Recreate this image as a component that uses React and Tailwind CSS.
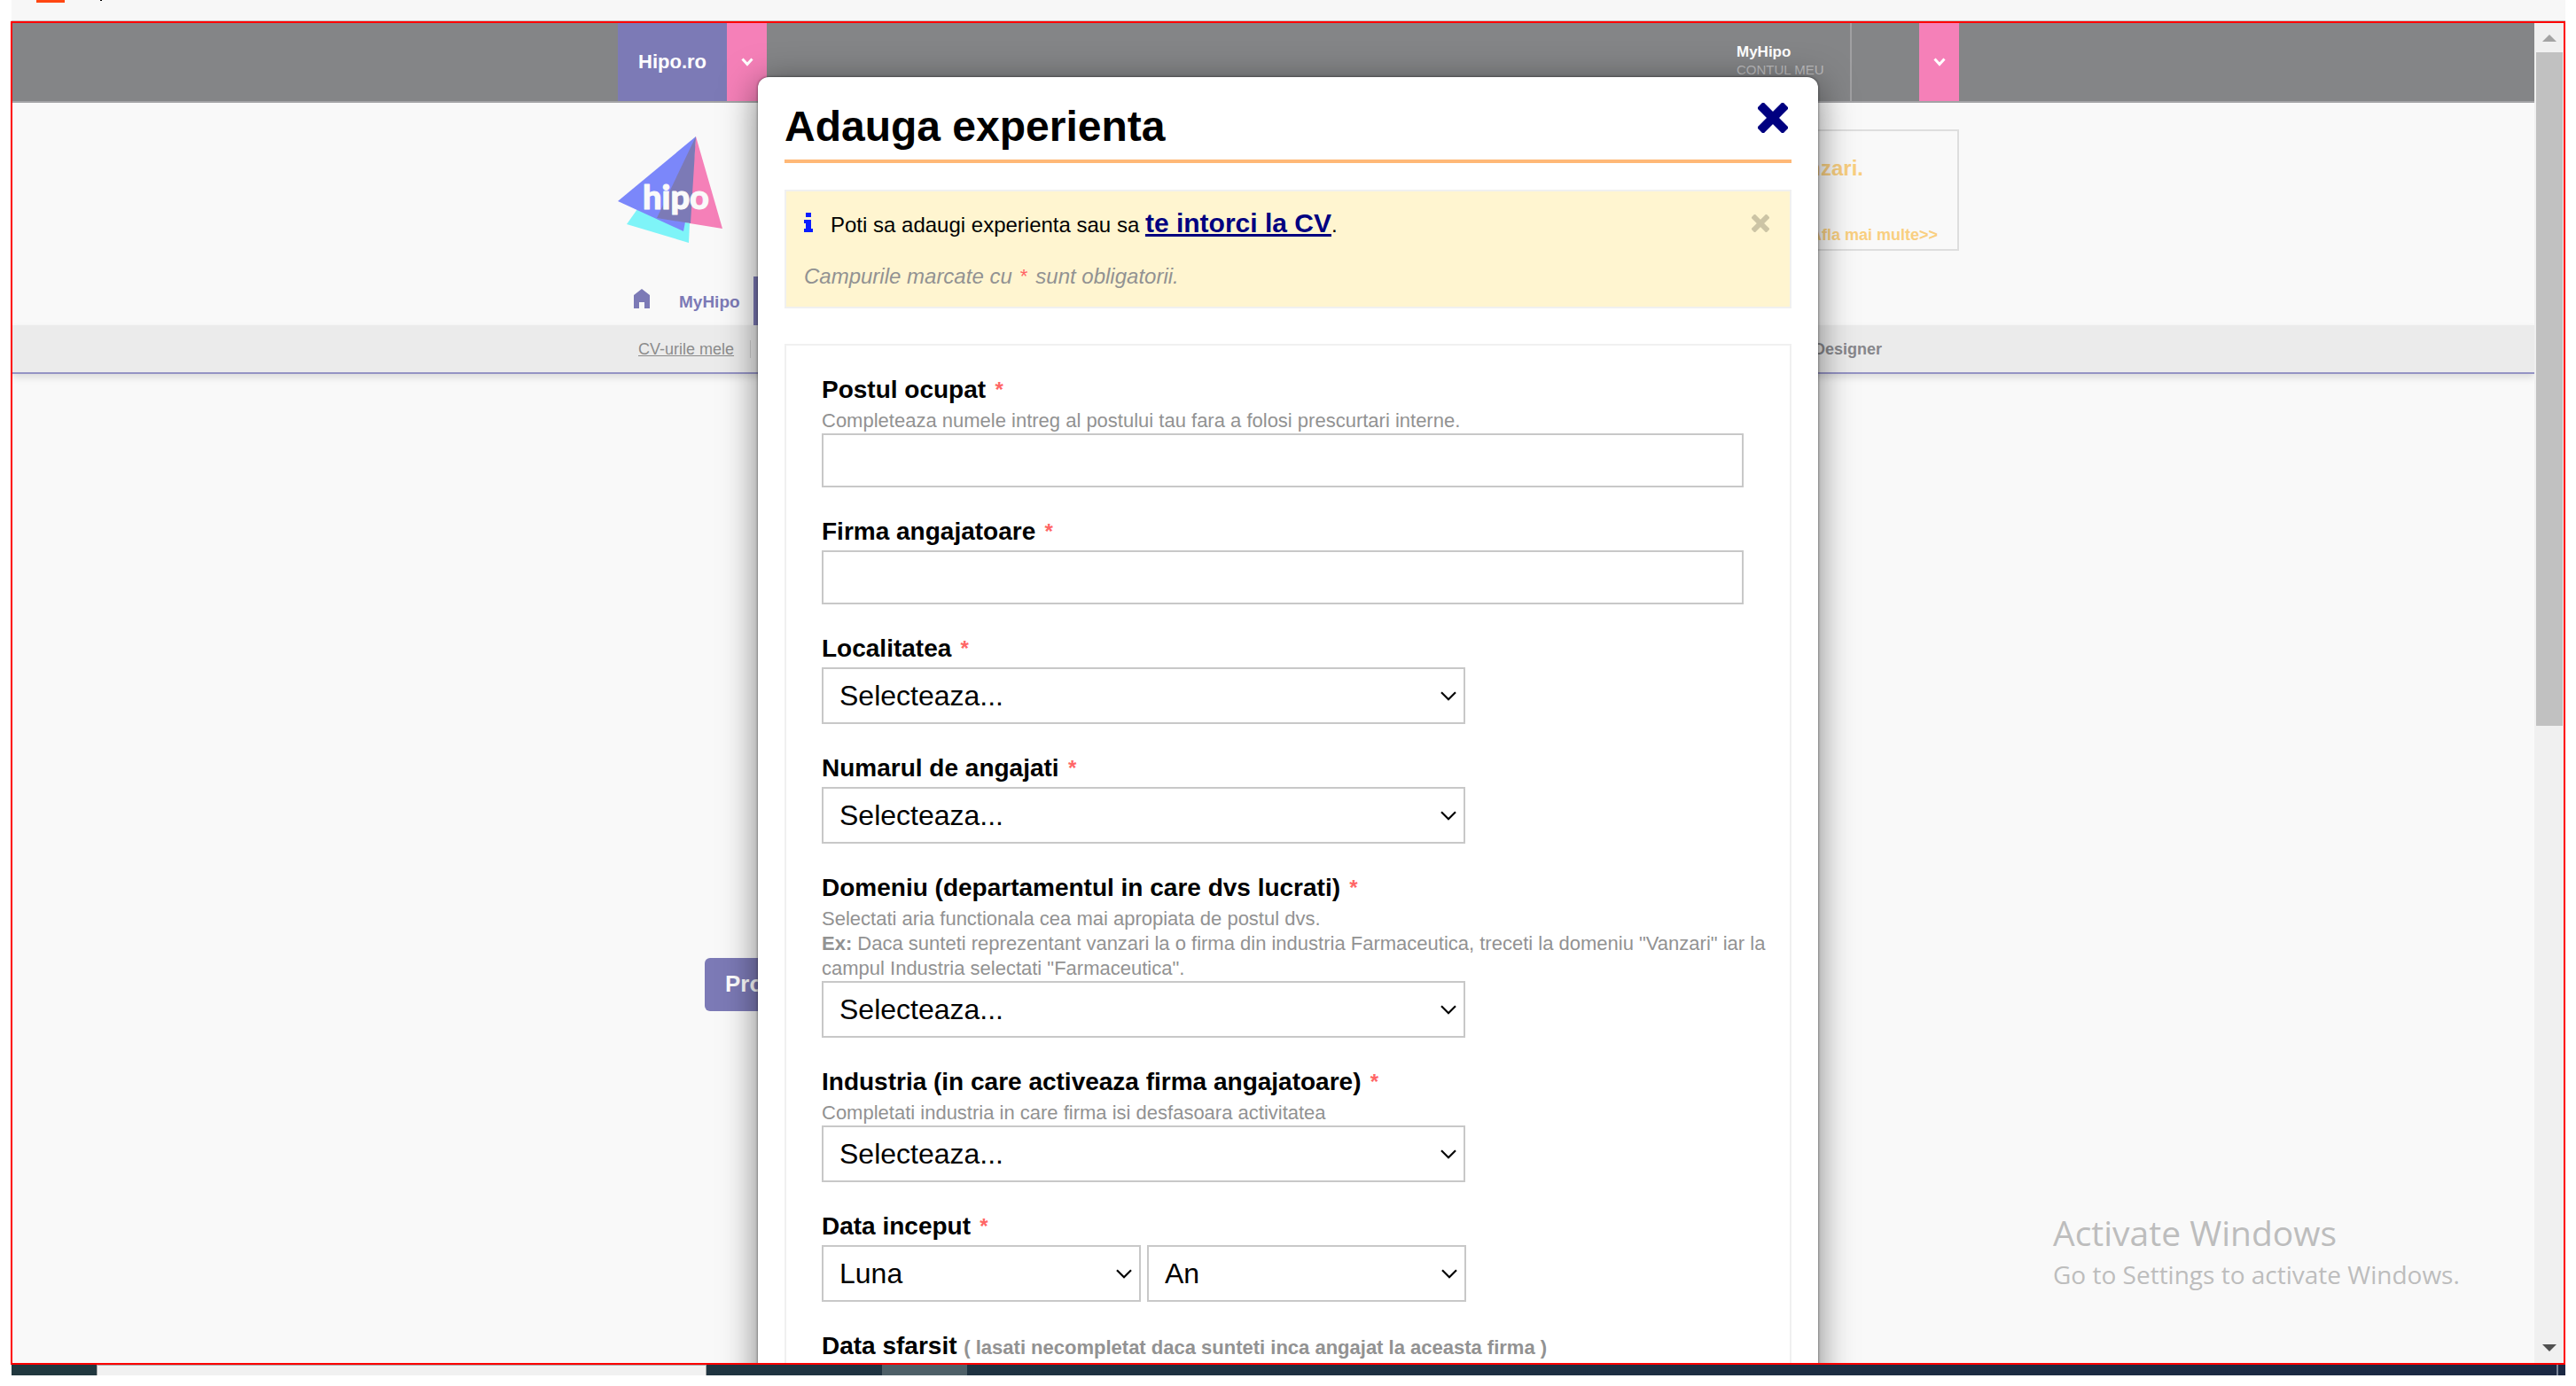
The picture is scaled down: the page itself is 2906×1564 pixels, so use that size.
import React from "react";

function Chevron({ className }) {
  return (
    <svg viewBox="0 0 14 10" className={className} fill="none" stroke="currentColor" strokeWidth="3" aria-hidden="true">
      <path d="M1.5 1.5 7 7.5 12.500 1.5" />
    </svg>
  );
}

function Cross({ className }) {
  return (
    <svg viewBox="0 0 34 34" className={className} fill="currentColor" aria-hidden="true">
      <rect x="-3.500" y="12" width="41" height="10" rx="1.500" transform="rotate(45 17 17)" />
      <rect x="-3.500" y="12" width="41" height="10" rx="1.500" transform="rotate(-45 17 17)" />
    </svg>
  );
}

function Logo() {
  return (
    <svg viewBox="1 0 120 122" className="h-[122px] w-[120px]" role="img" aria-label="hipo">
      <path d="M23 82 11 99 81 120 82 98Z" fill="#7ef4f8" />
      <path d="M89 0 1 73 75 107 80 80Z" fill="#7b87fa" />
      <path d="M89 0 119 104 82 98 84 60Z" fill="#f580b8" />
      <path d="M89 0 45 92 83 98Z" fill="#7c7ab6" />
      <text
        x="29"
        y="82"
        fill="#fafafa"
        stroke="#fafafa"
        strokeWidth="1"
        strokeLinejoin="round"
        fontFamily="Lato, sans-serif"
        fontWeight="900"
        fontSize="38"
      >
        hipo
      </text>
    </svg>
  );
}

function TopBar() {
  return (
    <div className="flex h-[90px] border-b-2 border-[#a3a3a6] bg-[#848587] pl-[683px]">
      <div className="flex w-[1513px] justify-between">
        <div className="flex">
          <a href="#hipo" className="flex w-[123px] items-center justify-center pb-0.5 bg-[#7c7ab6] text-[22px] font-bold text-white">
            Hipo.ro
          </a>
          <button aria-label="Meniu Hipo" className="flex w-[45px] items-center justify-center bg-[#f580b8] text-white">
            <Chevron className="h-2.5 w-3.5" />
          </button>
        </div>
        <div className="flex">
          <a href="#cont" className="flex w-[130px] flex-col border-r-2 border-[#a0a0a2] pt-[23px]">
            <span className="text-[17px] leading-5 font-bold text-white">MyHipo</span>
            <span className="text-[15px] leading-5 text-[#bcbcbe]">CONTUL MEU</span>
          </a>
          <button aria-label="Meniu cont" className="ml-[76px] flex w-[45px] items-center justify-center bg-[#f580b8] text-white">
            <Chevron className="h-2.5 w-3.5" />
          </button>
        </div>
      </div>
    </div>
  );
}

function SiteHeader() {
  return (
    <header>
      <TopBar />
      <div className="h-[251px] pl-[683px]">
        <div className="flex h-[196px] w-[1513px] justify-between pt-[30px]">
          <a href="#acasa" className="pt-2">
            <Logo />
          </a>
          <div className="flex h-[137px] w-[400px] flex-col items-end justify-between border-2 border-[#dedede] pt-[26px] pr-[22px] pb-0.5 font-bold text-[#f9cf80]">
            <p className="pr-[84px] text-2xl">Vanzari.</p>
            <a href="#afla" className="text-lg">Afla mai multe&gt;&gt;</a>
          </div>
        </div>
        <nav className="flex h-[55px] text-[19px] font-bold text-[#7c7ab6]">
          <a href="#home" aria-label="Acasa" className="ml-[17px] pt-[14px]">
            <svg viewBox="0 0 20 22" className="h-[22px] w-5" fill="currentColor" aria-hidden="true">
              <path d="M10 0 19 7V22H13V15H7V22H1V7Z" />
            </svg>
          </a>
          <a href="#myhipo" className="ml-8 pt-[15px]">MyHipo</a>
          <span className="ml-[15px] w-40 bg-[#7c7ab6]" />
        </nav>
      </div>
      <div className="flex h-[55px] items-center border-b-2 border-[#9493c4] bg-[#ebebeb] pl-[706px] text-lg text-[#8b8b8b] shadow-[0_4px_8px_rgba(0,0,0,0.12)]">
        <a href="#cv" className="underline">CV-urile mele</a>
        <span className="ml-[18px] h-5 w-px bg-[#cccccc]" />
        <span className="ml-[1199px] font-bold text-[#87878b]">Designer</span>
      </div>
    </header>
  );
}

function Required() {
  return <span className="font-['Liberation_Mono',monospace] text-2xl leading-none text-[#ff6666]">*</span>;
}

function SelectBox({ id, label, text, className }) {
  return (
    <div className={"relative " + className}>
      <select
        id={id}
        aria-label={label}
        className="h-16 w-full appearance-none border-2 border-[#c8c8c8] bg-white pl-[18px] text-[32px] text-black"
      >
        <option>{text}</option>
      </select>
      <svg
        viewBox="0 0 18 11"
        className="pointer-events-none absolute top-[27px] right-2.5 h-[11px] w-[18px]"
        fill="none"
        stroke="#000"
        strokeWidth="2.200"
        aria-hidden="true"
      >
        <path d="M1 1.200 9 9.200 17 1.200" />
      </svg>
    </div>
  );
}

function Field({ id, label, note, hint, required = true, children }) {
  return (
    <div>
      <label htmlFor={id} className="mb-[5px] block h-8 text-[28px] leading-8 font-bold text-black">
        {label} {required && <Required />}
        {note && <span className="text-[22px] leading-none text-[#929292]">{note}</span>}
      </label>
      {hint && <div className="text-[22px] leading-7 text-[#929292]">{hint}</div>}
      {children}
    </div>
  );
}

const inputClass = "block h-[61px] w-[1040px] max-w-full border-2 border-[#c8c8c8] bg-white px-4 text-[32px]";

function ExperienceForm() {
  return (
    <form className="mt-10 flex flex-col gap-[34px] border-2 border-[#f0f0f0] pt-[34px] pr-5 pb-8 pl-10">
      <Field id="post" label="Postul ocupat" hint="Completeaza numele intreg al postului tau fara a folosi prescurtari interne.">
        <input id="post" type="text" className={inputClass} />
      </Field>
      <Field id="firma" label="Firma angajatoare">
        <input id="firma" type="text" className={inputClass} />
      </Field>
      <Field id="loc" label="Localitatea">
        <SelectBox id="loc" text="Selecteaza..." className="w-[726px]" />
      </Field>
      <Field id="nr" label="Numarul de angajati">
        <SelectBox id="nr" text="Selecteaza..." className="w-[726px]" />
      </Field>
      <Field
        id="dom"
        label="Domeniu (departamentul in care dvs lucrati)"
        hint={
          <>
            <p>Selectati aria functionala cea mai apropiata de postul dvs.</p>
            <p>
              <b>Ex:</b> Daca sunteti reprezentant vanzari la o firma din industria Farmaceutica, treceti la domeniu
              "Vanzari" iar la campul Industria selectati "Farmaceutica".
            </p>
          </>
        }
      >
        <SelectBox id="dom" text="Selecteaza..." className="w-[726px]" />
      </Field>
      <Field
        id="ind"
        label="Industria (in care activeaza firma angajatoare)"
        hint="Completati industria in care firma isi desfasoara activitatea"
      >
        <SelectBox id="ind" text="Selecteaza..." className="w-[726px]" />
      </Field>
      <Field id="luna" label="Data inceput">
        <div className="flex gap-[7px]">
          <SelectBox id="luna" text="Luna" className="w-[360px]" />
          <SelectBox id="an" label="An" text="An" className="w-[360px]" />
        </div>
      </Field>
      <Field id="luna2" label="Data sfarsit" required={false} note="( lasati necompletat daca sunteti inca angajat la aceasta firma )">
        <div className="flex gap-[7px]">
          <SelectBox id="luna2" text="Luna" className="w-[360px]" />
          <SelectBox id="an2" label="An" text="An" className="w-[360px]" />
        </div>
      </Field>
    </form>
  );
}

function Modal() {
  return (
    <div
      role="dialog"
      aria-label="Adauga experienta"
      className="absolute top-[61px] left-[841px] w-[1196px] rounded-t-xl bg-white px-[30px] pt-6 shadow-[0_0_3px_rgba(0,0,0,0.6),0_8px_40px_rgba(0,0,0,0.5)]"
    >
      <div className="flex h-[73px] items-start justify-between border-b-4 border-[#ffb877]">
        <h1 className="text-5xl leading-[64px] font-bold text-black">Adauga experienta</h1>
        <button aria-label="Inchide" className="mt-[5px] mr-1 text-[#000080]">
          <Cross className="size-[34px]" />
        </button>
      </div>
      <div className="mt-[30px] flex h-[134px] justify-between border-2 border-[#f0f0f0] bg-[#fff5d0] pt-[18px] pr-[23px] pl-5">
        <div>
          <p className="flex items-baseline text-2xl leading-9 text-black">
            <svg viewBox="0 0 10 22" className="mr-5 h-[22px] w-2.5" fill="#0a1cff" aria-hidden="true">
              <path d="M2 0H8V5H2ZM0 8H8V18H10V22H0V18H2V12H0Z" />
            </svg>
            <span>
              Poti sa adaugi experienta sau sa{" "}
              <a href="#cv" className="text-[30px] font-bold text-[#000080] underline">te intorci la CV</a>.
            </span>
          </p>
          <p className="mt-[22px] text-2xl leading-9 text-[#929292] italic">
            Campurile marcate cu{" "}
            <span className="font-['Liberation_Mono',monospace] text-[22px] leading-none text-[#ff6666] not-italic">*</span>{" "}
            sunt obligatorii.
          </p>
        </div>
        <button aria-label="Ascunde mesajul" className="mt-2 flex self-start text-[#ccc4a5]">
          <Cross className="size-5" />
        </button>
      </div>
      <ExperienceForm />
    </div>
  );
}

function Scrollbar() {
  return (
    <div className="flex w-[33px] flex-col items-center justify-between bg-[#f0f0f0] py-[13px]" aria-hidden="true">
      <div className="flex flex-col items-center">
        <svg viewBox="0 0 16 8" className="h-2 w-4" fill="#a3a3a3"><path d="M8 0 16 8H0Z" /></svg>
        <div className="mt-3 h-[760px] w-[30px] bg-[#c1c1c1]" />
      </div>
      <svg viewBox="0 0 16 8" className="h-2 w-4" fill="#505050"><path d="M0 0H16L8 8Z" /></svg>
    </div>
  );
}

function Taskbar() {
  return (
    <div className="ml-px flex h-3 bg-linear-to-r from-[#21383f] to-[#1b2843]">
      <div className="ml-24 w-[688px] border-x border-t border-[#aaaaaa] bg-[#f1f1f1]" />
      <div className="ml-[198px] w-24 bg-[#4e6068]" />
      <div className="mr-2 ml-auto w-0.5 bg-[#7b8598]" />
    </div>
  );
}

export default function App() {
  return (
    <div className="flex h-screen flex-col overflow-hidden bg-white px-3 pb-3 font-['Liberation_Sans',Arial,sans-serif]">
      <div className="ml-px flex h-6 items-start gap-10 border-b border-[#c4c4c4] bg-[#f7f7f7] pl-7">
        <span className="h-[3px] w-8 bg-[#ff4612]" />
        <span className="h-px w-0.5 bg-black" />
      </div>
      <div className="relative flex min-h-0 flex-1 overflow-hidden border-2 border-[#ff0000]">
        <main className="min-w-0 flex-1 overflow-hidden bg-[#f9f9f9]">
          <SiteHeader />
          <button className="mt-[659px] ml-[781px] block h-[60px] w-[300px] rounded-md bg-[#7c7ab6] pb-0.5 pl-[23px] text-left text-[26px] font-bold text-white">
            Profil
          </button>
        </main>
        <Modal />
        <div className="absolute right-[152px] bottom-20 w-[424px] font-['Open_Sans','Noto_Sans',sans-serif] text-[#bdbdbd]">
          <p className="text-[39px] leading-[54px]">Activate Windows</p>
          <p className="text-[28px] leading-10 whitespace-nowrap">Go to Settings to activate Windows.</p>
        </div>
        <Scrollbar />
      </div>
      <Taskbar />
    </div>
  );
}
